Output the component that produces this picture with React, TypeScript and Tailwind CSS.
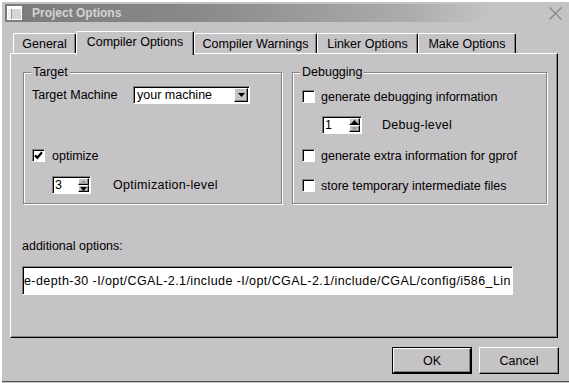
import React from 'react';

const sunken =
  'border border-t-[#848284] border-l-[#848284] border-r-white border-b-white shadow-[inset_1px_1px_0_#000]';
const raised =
  'border border-t-white border-l-white border-r-black border-b-black shadow-[inset_-1px_-1px_0_#848284]';

// small filled triangle used by combo and spin buttons
const Arrow: React.FC<{ dir: 'up' | 'down'; color?: string }> = ({ dir, color = '#000' }) => (
  <svg width="7" height="4" viewBox="0 0 7 4">
    {dir === 'up' ? (
      <polygon points="3.5,0 7,4 0,4" fill={color} />
    ) : (
      <polygon points="0,0 7,0 3.5,4" fill={color} />
    )}
  </svg>
);

const CheckBox: React.FC<{ checked?: boolean }> = ({ checked }) => (
  <div className={`w-[13px] h-[13px] shrink-0 bg-white flex items-center justify-center ${sunken}`}>
    {checked && (
      <svg width="9" height="9" viewBox="0 0 9 9">
        <path d="M1 4.2 L3.3 6.8 L8 1.2" stroke="#000" strokeWidth="2.2" fill="none" />
      </svg>
    )}
  </div>
);

const SpinBox: React.FC<{ value: string; upOn: boolean; downOn: boolean; w: string }> = ({
  value,
  upOn,
  downOn,
  w,
}) => (
  <div className={`${w} h-[18px] bg-white flex ${sunken}`}>
    <span className="flex-1 pl-[2px] leading-[16px]">{value}</span>
    <div className="flex flex-col w-[11px] my-[1px] mr-[1px]">
      <div className={`flex-1 bg-[#c6c3c6] flex items-center justify-center ${raised}`}>
        <Arrow dir="up" color={upOn ? '#000' : '#9c9a9c'} />
      </div>
      <div className={`flex-1 bg-[#c6c3c6] flex items-center justify-center ${raised}`}>
        <Arrow dir="down" color={downOn ? '#000' : '#9c9a9c'} />
      </div>
    </div>
  </div>
);

const GroupBox: React.FC<{ title: string; className: string; children: React.ReactNode }> = ({
  title,
  className,
  children,
}) => (
  <div
    className={`relative flex flex-col border border-[#848284] shadow-[inset_1px_1px_0_#fff,1px_1px_0_#fff] ${className}`}
  >
    <span className="absolute left-[7px] -top-[8px] bg-[#c6c3c6] px-[2px] leading-[14px]">{title}</span>
    {children}
  </div>
);

const Tab: React.FC<{ label: string; w: string; active?: boolean }> = ({ label, w, active }) => (
  <div
    className={`${w} flex items-center justify-center rounded-t-[2px] border-t border-l border-r border-t-white border-l-white border-r-black shadow-[inset_-1px_0_0_#848284] bg-[#c6c3c6] ${
      active ? 'h-[24px] -mb-[2px] relative z-10 pb-[3px]' : 'h-[20px]'
    }`}
  >
    {label}
  </div>
);

export default function App() {
  return (
    <div className="w-[569px] h-[383px] overflow-hidden bg-[#c6c3c6] border-t-2 border-l-2 border-white flex flex-col text-[12.5px] leading-[14px] text-black font-['Liberation_Sans',Arial,sans-serif]">
      {/* Title bar */}
      <div className="mt-[2px] ml-[3px] mr-[7px] h-[18px] flex items-center">
        <div className="flex-1 h-full flex items-center bg-[linear-gradient(to_right,#7b7b7b,#8a898a_35%,#adacad_75%,#c6c3c6_90%)]">
          <svg className="ml-[2px]" width="15" height="14" viewBox="0 0 15 14">
            <rect x="0.5" y="0.5" width="14" height="13" fill="#d6d6d6" stroke="#fff" />
            <rect x="1" y="1" width="13" height="2" fill="#fff" />
            <rect x="1" y="3" width="3" height="10" fill="#efefef" />
            <line x1="4.5" y1="3" x2="4.5" y2="13" stroke="#9a9a9a" />
          </svg>
          <span className="ml-[10px] text-[12px] font-bold text-[#d4d4d4]">Project Options</span>
        </div>
        <svg className="ml-[4px]" width="13" height="13" viewBox="0 0 13 13">
          <path d="M0.5 0.5 L12.5 12.5 M12.5 0.5 L0.5 12.5" stroke="#858585" strokeWidth="1.2" />
        </svg>
      </div>

      {/* Tabs */}
      <div className="mt-[9px] ml-[11px] h-[22px] flex items-end">
        <Tab label="General" w="w-[63px]" />
        <Tab label="Compiler Options" w="w-[118px]" active />
        <Tab label="Compiler Warnings" w="w-[123px]" />
        <Tab label="Linker Options" w="w-[101px]" />
        <Tab label="Make Options" w="w-[98px]" />
      </div>

      {/* Tab page */}
      <div className="ml-[8px] w-[548px] h-[285px] shrink-0 flex flex-col pl-[11px] border-t border-l border-white border-r border-b border-r-black border-b-black shadow-[inset_-1px_-1px_0_#848284]">
        <div className="mt-[18px] ml-[1px] flex gap-[10px]">
          <GroupBox title="Target" className="w-[259px] h-[132px]">
            <div className="mt-[13px] pl-[8px] h-[18px] flex items-center">
              <span className="w-[101px]">Target Machine</span>
              <div className={`w-[117px] h-[18px] bg-white flex items-center ${sunken}`}>
                <span className="flex-1 pl-[3px]">your machine</span>
                <div className={`w-[14px] h-[14px] mr-[1px] bg-[#c6c3c6] flex items-center justify-center ${raised}`}>
                  <Arrow dir="down" />
                </div>
              </div>
            </div>
            <div className="mt-[45px] pl-[8px] h-[13px] flex items-center gap-[7px]">
              <CheckBox checked />
              <span>optimize</span>
            </div>
            <div className="mt-[14px] pl-[28px] flex items-center">
              <SpinBox value="3" upOn={false} downOn w="w-[39px]" />
              <span className="ml-[22px] tracking-[0.3px]">Optimization-level</span>
            </div>
          </GroupBox>

          <GroupBox title="Debugging" className="w-[255px] h-[132px]">
            <div className="mt-[17px] pl-[9px] h-[13px] flex items-center gap-[6px]">
              <CheckBox />
              <span>generate debugging information</span>
            </div>
            <div className="mt-[13px] pl-[29px] flex items-center">
              <SpinBox value="1" upOn downOn={false} w="w-[40px]" />
              <span className="ml-[20px] tracking-[0.3px]">Debug-level</span>
            </div>
            <div className="mt-[15px] pl-[9px] h-[13px] flex items-center gap-[6px]">
              <CheckBox />
              <span>generate extra information for gprof</span>
            </div>
            <div className="mt-[17px] pl-[9px] h-[13px] flex items-center gap-[6px]">
              <CheckBox />
              <span>store temporary intermediate files</span>
            </div>
          </GroupBox>
        </div>

        <div className="mt-[35px]">additional options:</div>
        <div className={`mt-[13px] w-[491px] h-[29px] bg-white flex items-center overflow-hidden ${sunken}`}>
          <span className="pl-[1px] whitespace-nowrap tracking-[0.42px]">
            e-depth-30 -I/opt/CGAL-2.1/include -I/opt/CGAL-2.1/include/CGAL/config/i586_Lin
          </span>
        </div>
      </div>

      {/* Buttons */}
      <div className="mt-[9px] pr-[10px] flex justify-end gap-[7px]">
        <div className="w-[80px] h-[27px] border border-black">
          <div className={`w-full h-full flex items-center justify-center ${raised}`}>OK</div>
        </div>
        <div className={`w-[80px] h-[27px] flex items-center justify-center ${raised}`}>Cancel</div>
      </div>

      <div className="mt-auto mb-[1px] h-px bg-[#525152]" />
    </div>
  );
}
